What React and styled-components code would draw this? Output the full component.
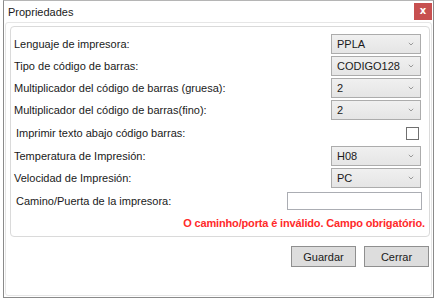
import React from "react";
import styled, { createGlobalStyle } from "styled-components";

const Global = createGlobalStyle`
  html, body { margin: 0; padding: 0; background: #ffffff; }
  body { font-family: "Liberation Sans", Arial, sans-serif; font-size: 11px; color: #1a1a1a; }
  * { box-sizing: border-box; }
`;

const Window = styled.div`
  margin-left: 3px;
  width: 431px;
  height: 298px;
  border: 1px solid #8a8a8a;
  border-top-color: #b5b5b5;
  background: #ffffff;
  display: flex;
  flex-direction: column;
`;

const TitleBar = styled.div`
  height: 21px;
  display: flex;
  justify-content: space-between;
  align-items: flex-start;
  padding-left: 4px;
`;

const Title = styled.span`
  font-size: 11px;
  line-height: 22px;
`;

const CloseBtn = styled.div`
  width: 18px;
  height: 17px;
  margin-top: 2px;
  margin-right: 1px;
  background: #c75050;
  color: #fff;
  font-weight: 700;
  font-size: 10px;
  line-height: 16px;
  text-align: center;
  font-family: "DejaVu Sans", sans-serif;
`;

const Frame = styled.div`
  flex: 1;
  margin: 0 1px 1px 1px;
  border: 1px solid #e6e6e6;
  border-radius: 3px;
  padding: 3px 1px 0 4px;
  display: flex;
  flex-direction: column;
`;

const Group = styled.div`
  height: 211px;
  border: 1px solid #dadada;
  border-radius: 4px;
  padding: 7px 8px 0 3px;
  display: flex;
  flex-direction: column;
  gap: 2px;
`;

const Row = styled.div`
  display: flex;
  align-items: center;
  justify-content: space-between;
  height: ${(p) => p.$h || 20}px;
`;

const Label = styled.span`
  padding-left: ${(p) => (p.$indent ? 2 : 0)}px;
  white-space: nowrap;
`;

const Select = styled.div`
  width: 90px;
  height: 20px;
  border: 1px solid #acacac;
  background: linear-gradient(#f0f0f0, #e5e5e5);
  display: flex;
  align-items: center;
  justify-content: space-between;
  padding: 0 6px 0 5px;
`;

const Chevron = () => (
  <svg width="6" height="4" viewBox="0 0 6 4">
    <path d="M0.8 0.8 L3 3 L5.2 0.8" fill="none" stroke="#9a9a9a" strokeWidth="1" />
  </svg>
);

const Check = styled.div`
  width: 13px;
  height: 13px;
  border: 1px solid #707070;
  background: #fff;
  margin-right: 2px;
`;

const TextBox = styled.div`
  width: 135px;
  height: 18px;
  border: 1px solid #abadb3;
  background: #fff;
  margin-right: -1px;
`;

const ErrorText = styled.div`
  height: 18px;
  text-align: right;
  color: #ff2a2a;
  font-weight: 700;
  letter-spacing: -0.15px;
  line-height: 18px;
  margin-right: -4px;
  white-space: nowrap;
`;

const Buttons = styled.div`
  display: flex;
  justify-content: flex-end;
  gap: 8px;
  margin-top: 9px;
  padding-right: 1px;
`;

const Button = styled.div`
  width: 65px;
  height: 21px;
  border: 1px solid #8f8f8f;
  background: #dddddd;
  display: flex;
  align-items: center;
  justify-content: center;
`;

const SelectBox = ({ value }) => (
  <Select>
    <span>{value}</span>
    <Chevron />
  </Select>
);

export default function App() {
  return (
    <>
      <Global />
      <Window>
        <TitleBar>
          <Title>Propriedades</Title>
          <CloseBtn>x</CloseBtn>
        </TitleBar>
        <Frame>
          <Group>
            <Row>
              <Label>Lenguaje de impresora:</Label>
              <SelectBox value="PPLA" />
            </Row>
            <Row>
              <Label>Tipo de código de barras:</Label>
              <SelectBox value="CODIGO128" />
            </Row>
            <Row>
              <Label>Multiplicador del código de barras (gruesa):</Label>
              <SelectBox value="2" />
            </Row>
            <Row>
              <Label>Multiplicador del código de barras(fino):</Label>
              <SelectBox value="2" />
            </Row>
            <Row $h={22}>
              <Label $indent>Imprimir texto abajo código barras:</Label>
              <Check />
            </Row>
            <Row>
              <Label>Temperatura de Impresión:</Label>
              <SelectBox value="H08" />
            </Row>
            <Row>
              <Label>Velocidad de Impresión:</Label>
              <SelectBox value="PC" />
            </Row>
            <Row $h={22}>
              <Label $indent>Camino/Puerta de la impresora:</Label>
              <TextBox />
            </Row>
            <ErrorText>O caminho/porta é inválido. Campo obrigatório.</ErrorText>
          </Group>
          <Buttons>
            <Button>Guardar</Button>
            <Button>Cerrar</Button>
          </Buttons>
        </Frame>
      </Window>
    </>
  );
}
